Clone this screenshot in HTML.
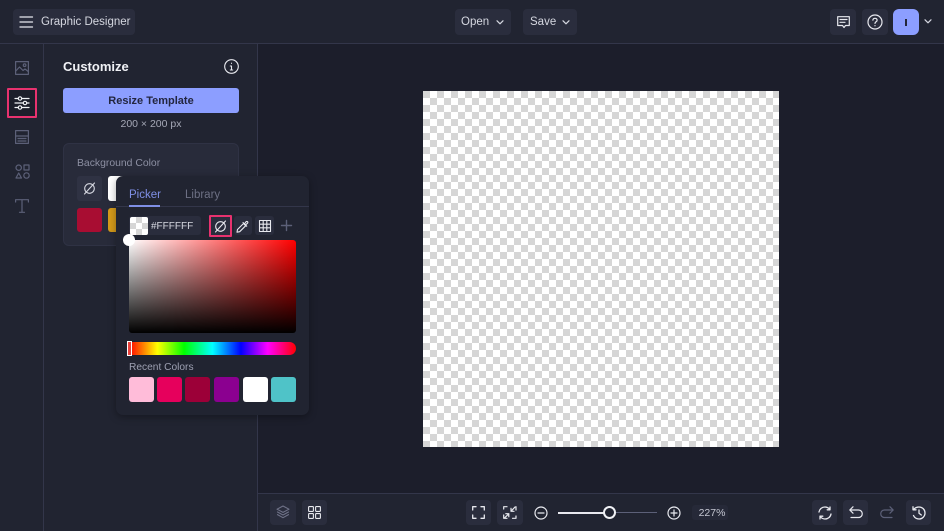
<!DOCTYPE html>
<html><head><meta charset="utf-8">
<style>
*{box-sizing:border-box}
html,body{margin:0;padding:0;width:944px;height:531px;overflow:hidden;background:#1c1e2b;font-family:"Liberation Sans",sans-serif}
.a{position:absolute}
.t{position:absolute;white-space:nowrap;line-height:1}
.btn{position:absolute;background:#2a2d3d;border-radius:4px}
svg{position:absolute;overflow:visible;fill:none;stroke-linecap:round;stroke-linejoin:round}
.sw{position:absolute;width:25px;height:25px;border-radius:3px;top:377px}
</style></head><body>
<div class="a" style="left:0;top:0;width:944px;height:44px;background:#212431;border-bottom:1px solid #33364a"></div>
<div class="a" style="left:0;top:44px;width:44px;height:487px;background:#212431;border-right:1px solid #33364a"></div>
<div class="a" style="left:44px;top:44px;width:214px;height:487px;background:#212431;border-right:1px solid #33364a"></div>
<div class="a" style="left:258px;top:493px;width:686px;height:38px;background:#212431;border-top:1px solid #33364a"></div>

<!-- top bar -->
<div class="btn" style="left:13px;top:9px;width:122px;height:26px"></div>
<svg style="left:20px;top:16px" width="13" height="12" stroke="#e8e9ef" stroke-width="1.3"><path d="M0 1H12.5M0 6H12.5M0 11H12.5"/></svg>
<div class="t" style="left:41px;top:17px;font-size:11.5px;color:#d5d7e0">Graphic Designer</div>
<div class="btn" style="left:455px;top:9px;width:56px;height:26px"></div>
<div class="t" style="left:461px;top:17px;font-size:11.5px;color:#d5d7e0">Open</div>
<svg style="left:496px;top:20px" width="8" height="5" stroke="#d5d7e0" stroke-width="1.2"><path d="M1 .8L4 3.8L7 .8"/></svg>
<div class="btn" style="left:523px;top:9px;width:54px;height:26px"></div>
<div class="t" style="left:530px;top:17px;font-size:11.5px;color:#d5d7e0">Save</div>
<svg style="left:562px;top:20px" width="8" height="5" stroke="#d5d7e0" stroke-width="1.2"><path d="M1 .8L4 3.8L7 .8"/></svg>
<div class="btn" style="left:830px;top:9px;width:26px;height:26px"></div>
<svg style="left:837px;top:16px" width="13" height="13" stroke="#e8e9ef" stroke-width="1.2"><path d="M.7 .7H12.3V9.5H8.5L7 11.5L5.5 9.5H.7ZM3 3.5H10M3 6.3H8"/></svg>
<div class="btn" style="left:862px;top:9px;width:26px;height:26px"></div>
<svg style="left:867px;top:14px" width="16" height="16" stroke="#e8e9ef" stroke-width="1.2"><circle cx="8" cy="8" r="7"/><path d="M5.9 6.2C6 3.7 10 3.7 10.1 6.2C10.1 7.9 8 7.7 8 9.4"/><path d="M8 11.6V11.8"/></svg>
<div class="a" style="left:893px;top:9px;width:26px;height:26px;border-radius:6px;background:#8c9eff"></div>
<div class="a" style="left:905px;top:19px;width:1.6px;height:7px;background:#23263a"></div>
<svg style="left:924px;top:19px" width="8" height="5" stroke="#d5d7e0" stroke-width="1.2"><path d="M1 .8L4 3.8L7 .8"/></svg>

<!-- left rail -->
<svg style="left:15px;top:61px" width="14" height="14" stroke="#5c6078" stroke-width="1.2"><rect x=".6" y=".6" width="12.8" height="12.8"/><circle cx="9.6" cy="4.2" r="1.3"/><path d="M.8 10L4.5 6L8 9.5L10 8L13.2 10.5"/></svg>
<div class="a" style="left:7px;top:88px;width:30px;height:30px;background:#1c1e2b;border:2.5px solid #e8326f;border-radius:1px"></div>
<svg style="left:15px;top:96px" width="14" height="14" stroke="#f0f1f5" stroke-width="1.2"><path d="M0 2.5H3M7 2.5H14M0 7H8M12 7H14M0 11.5H3M7 11.5H14"/><circle cx="5" cy="2.5" r="1.7"/><circle cx="10" cy="7" r="1.7"/><circle cx="5" cy="11.5" r="1.7"/></svg>
<svg style="left:15px;top:130px" width="14" height="14" stroke="#5c6078" stroke-width="1.2"><rect x=".6" y=".6" width="12.8" height="12.8"/><path d="M.6 6H13.4M3 8.5H11M3 11H11"/></svg>
<svg style="left:15px;top:164px" width="15" height="15" stroke="#5c6078" stroke-width="1.2"><circle cx="3.7" cy="3.7" r="2.7"/><rect x="9" y="1" width="5" height="5"/><path d="M3.7 9L6.5 14H1Z"/><circle cx="11.5" cy="11.5" r="2.7"/></svg>
<svg style="left:15px;top:199px" width="14" height="14" stroke="#5c6078" stroke-width="1.2"><path d="M.6 3V.7H13.4V3M7 .7V13.3M4.5 13.3H9.5"/></svg>

<!-- customize panel -->
<div class="t" style="left:63px;top:60px;font-size:13px;font-weight:bold;color:#f0f1f5">Customize</div>
<svg style="left:224px;top:59px" width="15" height="15" stroke="#e8e9ef" stroke-width="1.1"><circle cx="7.5" cy="7.5" r="6.8"/><path d="M7.5 7V11M7.5 4.2V4.4M6.3 7H7.5M6.3 11H8.7"/></svg>
<div class="a" style="left:63px;top:88px;width:176px;height:25px;background:#8c9eff;border-radius:3px"></div>
<div class="t" style="left:63px;top:96px;width:176px;text-align:center;font-size:11px;font-weight:bold;color:#23263f">Resize Template</div>
<div class="t" style="left:63px;top:119px;width:176px;text-align:center;font-size:10.5px;color:#a5a8b6">200 × 200 px</div>
<div class="a" style="left:63px;top:143px;width:176px;height:103px;background:#282b3a;border-radius:6px;border:1px solid #2f3244"></div>
<div class="t" style="left:77px;top:159px;font-size:10.4px;color:#8d90a3">Background Color</div>
<div class="a" style="left:77px;top:176px;width:25px;height:25px;background:#2f3243;border-radius:3px"></div>
<svg style="left:83px;top:182px" width="13" height="13" stroke="#d5d7e0" stroke-width="1.1"><circle cx="6.5" cy="6.5" r="4.8"/><path d="M1.5 12L11.5 1"/></svg>
<div class="a" style="left:108px;top:176px;width:25px;height:25px;background:linear-gradient(90deg,#fff 0 60%,#ccc);border-radius:3px"></div>
<div class="a" style="left:77px;top:208px;width:25px;height:24px;background:#a80d32;border-radius:3px"></div>
<div class="a" style="left:108px;top:208px;width:25px;height:24px;background:#d49a1a;border-radius:3px"></div>

<!-- popup -->
<div class="a" style="left:116px;top:176px;width:193px;height:239px;background:#212431;border-radius:7px;box-shadow:0 2px 8px rgba(0,0,0,.35)"></div>
<div class="a" style="left:116px;top:206px;width:193px;height:1px;background:#33364a"></div>
<div class="t" style="left:129px;top:190px;font-size:11.5px;color:#7f8fe6">Picker</div>
<div class="a" style="left:129px;top:205px;width:31px;height:2px;background:#7f8fe6"></div>
<div class="t" style="left:185px;top:190px;font-size:11.5px;color:#6d7084">Library</div>
<div class="a" style="left:129px;top:216px;width:72px;height:19px;background:#2a2d3d;border-radius:3px"></div>
<div class="a" style="left:130px;top:217px;width:18px;height:18px;background-color:#fff;background-image:conic-gradient(#d6d6d6 25%,#fff 0 50%,#d6d6d6 0 75%,#fff 0);background-size:12px 12px;border-radius:2px"></div>
<div class="t" style="left:151px;top:222px;font-size:10px;color:#d5d7e0">#FFFFFF</div>
<div class="a" style="left:209px;top:215px;width:23px;height:22px;background:#2a2d3d;border:2px solid #e8326f;border-radius:1px"></div>
<svg style="left:214px;top:220px" width="13" height="13" stroke="#e8e9ef" stroke-width="1.1"><circle cx="6.5" cy="6.5" r="4.8"/><path d="M1.5 12L11.5 1"/></svg>
<div class="a" style="left:234px;top:216px;width:18px;height:19px;background:#2a2d3d;border-radius:3px"></div>
<svg style="left:236px;top:220px" width="13" height="13" stroke="#e8e9ef" stroke-width="1.1"><path d="M1 12.2L1.5 9.5L7.5 3.5L9.7 5.7L3.7 11.7ZM7 2.5L10.7 6.2M8.5 3.8L10 1.8C11 .7 12.6 2.2 11.5 3.2L9.5 5"/></svg>
<div class="a" style="left:255px;top:216px;width:19px;height:19px;background:#2a2d3d;border-radius:3px"></div>
<svg style="left:259px;top:220px" width="12" height="12" stroke="#e8e9ef" stroke-width="1.1"><path d="M.5 .5H11.5V11.5H.5ZM.5 4.2H11.5M.5 7.8H11.5M4.2 .5V11.5M7.8 .5V11.5"/></svg>
<svg style="left:281px;top:220px" width="11" height="11" stroke="#5c6078" stroke-width="1.4"><path d="M5.5 .5V10.5M.5 5.5H10.5"/></svg>
<div class="a" style="left:129px;top:240px;width:167px;height:93px;border-radius:3px;background:linear-gradient(to bottom,rgba(0,0,0,0),#000),linear-gradient(to right,#fff,#f00)"></div>
<div class="a" style="left:123px;top:234px;width:12px;height:12px;border-radius:50%;background:#fff"></div>
<div class="a" style="left:129px;top:342px;width:167px;height:13px;border-radius:0 7px 7px 0;background:linear-gradient(to right,#f00 0%,#ff0 17%,#0f0 33%,#0ff 50%,#00f 67%,#f0f 83%,#f00 100%)"></div>
<div class="a" style="left:127px;top:341px;width:5px;height:15px;background:#e8413c;border:1px solid #fff"></div>
<div class="t" style="left:129px;top:363px;font-size:10.2px;color:#9da0b2">Recent Colors</div>
<div class="sw" style="left:129px;background:#ffbcd9"></div>
<div class="sw" style="left:157px;background:#e6005c"></div>
<div class="sw" style="left:185px;background:#9c0038"></div>
<div class="sw" style="left:214px;background:#8b0090"></div>
<div class="sw" style="left:243px;background:#fff"></div>
<div class="sw" style="left:271px;background:#4fc3c8"></div>

<!-- canvas -->
<div class="a" style="left:423px;top:91px;width:356px;height:356px;background-color:#fff;background-image:conic-gradient(#fff 25%,#d6d6d6 0 50%,#fff 0 75%,#d6d6d6 0);background-size:14px 14px"></div>

<!-- bottom bar -->
<div class="btn" style="left:270px;top:500px;width:26px;height:25px"></div>
<svg style="left:276px;top:505px" width="14" height="14" stroke="#6f7288" stroke-width="1.1"><path d="M7 1L13 4.2L7 7.4L1 4.2ZM1.5 7L7 10L12.5 7M1.5 9.6L7 12.7L12.5 9.6"/></svg>
<div class="btn" style="left:302px;top:500px;width:25px;height:25px"></div>
<svg style="left:308px;top:506px" width="13" height="13" stroke="#e8e9ef" stroke-width="1.1"><rect x=".6" y=".6" width="4.8" height="4.8" rx=".6"/><rect x="7.6" y=".6" width="4.8" height="4.8" rx=".6"/><rect x=".6" y="7.6" width="4.8" height="4.8" rx=".6"/><rect x="7.6" y="7.6" width="4.8" height="4.8" rx=".6"/></svg>
<div class="btn" style="left:466px;top:500px;width:25px;height:25px"></div>
<svg style="left:472px;top:506px" width="13" height="13" stroke="#e8e9ef" stroke-width="1.3"><path d="M.7 4V.7H4M9 .7H12.3V4M12.3 9V12.3H9M4 12.3H.7V9"/></svg>
<div class="btn" style="left:497px;top:500px;width:26px;height:25px"></div>
<svg style="left:503px;top:506px" width="14" height="13" stroke="#e8e9ef" stroke-width="1.2"><path d="M.7 3V.7H4M13 10V12.3H9.5M4 12.3H.7V9M13 4V.7M8 5.3L12 1M8 5.3H11M8 5.3V2.3M5.8 7.7L1.5 12M5.8 7.7H2.8M5.8 7.7V10.7"/></svg>
<svg style="left:534px;top:506px" width="14" height="14" stroke="#e8e9ef" stroke-width="1.2"><circle cx="7" cy="7" r="6"/><path d="M4 7H10"/></svg>
<div class="a" style="left:558px;top:512px;width:50px;height:1.5px;background:#e8e9ef"></div>
<div class="a" style="left:609px;top:512px;width:48px;height:1px;background:#5c6078"></div>
<div class="a" style="left:603px;top:506px;width:13px;height:13px;border-radius:50%;background:#212431;border:2px solid #f0f1f5"></div>
<svg style="left:667px;top:506px" width="14" height="14" stroke="#e8e9ef" stroke-width="1.2"><circle cx="7" cy="7" r="6"/><path d="M4 7H10M7 4V10"/></svg>
<div class="a" style="left:692px;top:505px;width:36px;height:15px;background:#262938;border-radius:3px"></div>
<div class="t" style="left:692px;top:508px;width:40px;text-align:center;font-size:10.5px;color:#c5c7d2">227%</div>
<div class="btn" style="left:812px;top:500px;width:25px;height:25px"></div>
<svg style="left:818px;top:506px" width="14" height="14" stroke="#e8e9ef" stroke-width="1.3"><path d="M1 6C1.5 3 4 1 7 1C9 1 10.7 2 12 3.5M12 1V3.8H9.2M13 8C12.5 11 10 13 7 13C5 13 3.3 12 2 10.5M2 13V10.2H4.8"/></svg>
<div class="btn" style="left:843px;top:500px;width:25px;height:25px"></div>
<svg style="left:849px;top:506px" width="14" height="13" stroke="#e8e9ef" stroke-width="1.2"><path d="M4 .8L.8 4L4 7.2M.8 4H9.5C14.5 4 14.5 11.5 9.5 11.5H2"/></svg>
<svg style="left:880px;top:506px" width="14" height="13" stroke="#5c6078" stroke-width="1.2"><path d="M10 .8L13.2 4L10 7.2M13.2 4H4.5C-.5 4-.5 11.5 4.5 11.5H12"/></svg>
<div class="btn" style="left:906px;top:500px;width:25px;height:25px"></div>
<svg style="left:912px;top:506px" width="14" height="14" stroke="#e8e9ef" stroke-width="1.3"><path d="M1.5 3.5C3 1.8 5 1 7 1C10.5 1 13 3.7 13 7C13 10.3 10.3 13 7 13C4.5 13 2.5 11.6 1.5 9.5M1 .8V3.8H4M7 4V7.2L9.3 9"/></svg>
</body></html>
